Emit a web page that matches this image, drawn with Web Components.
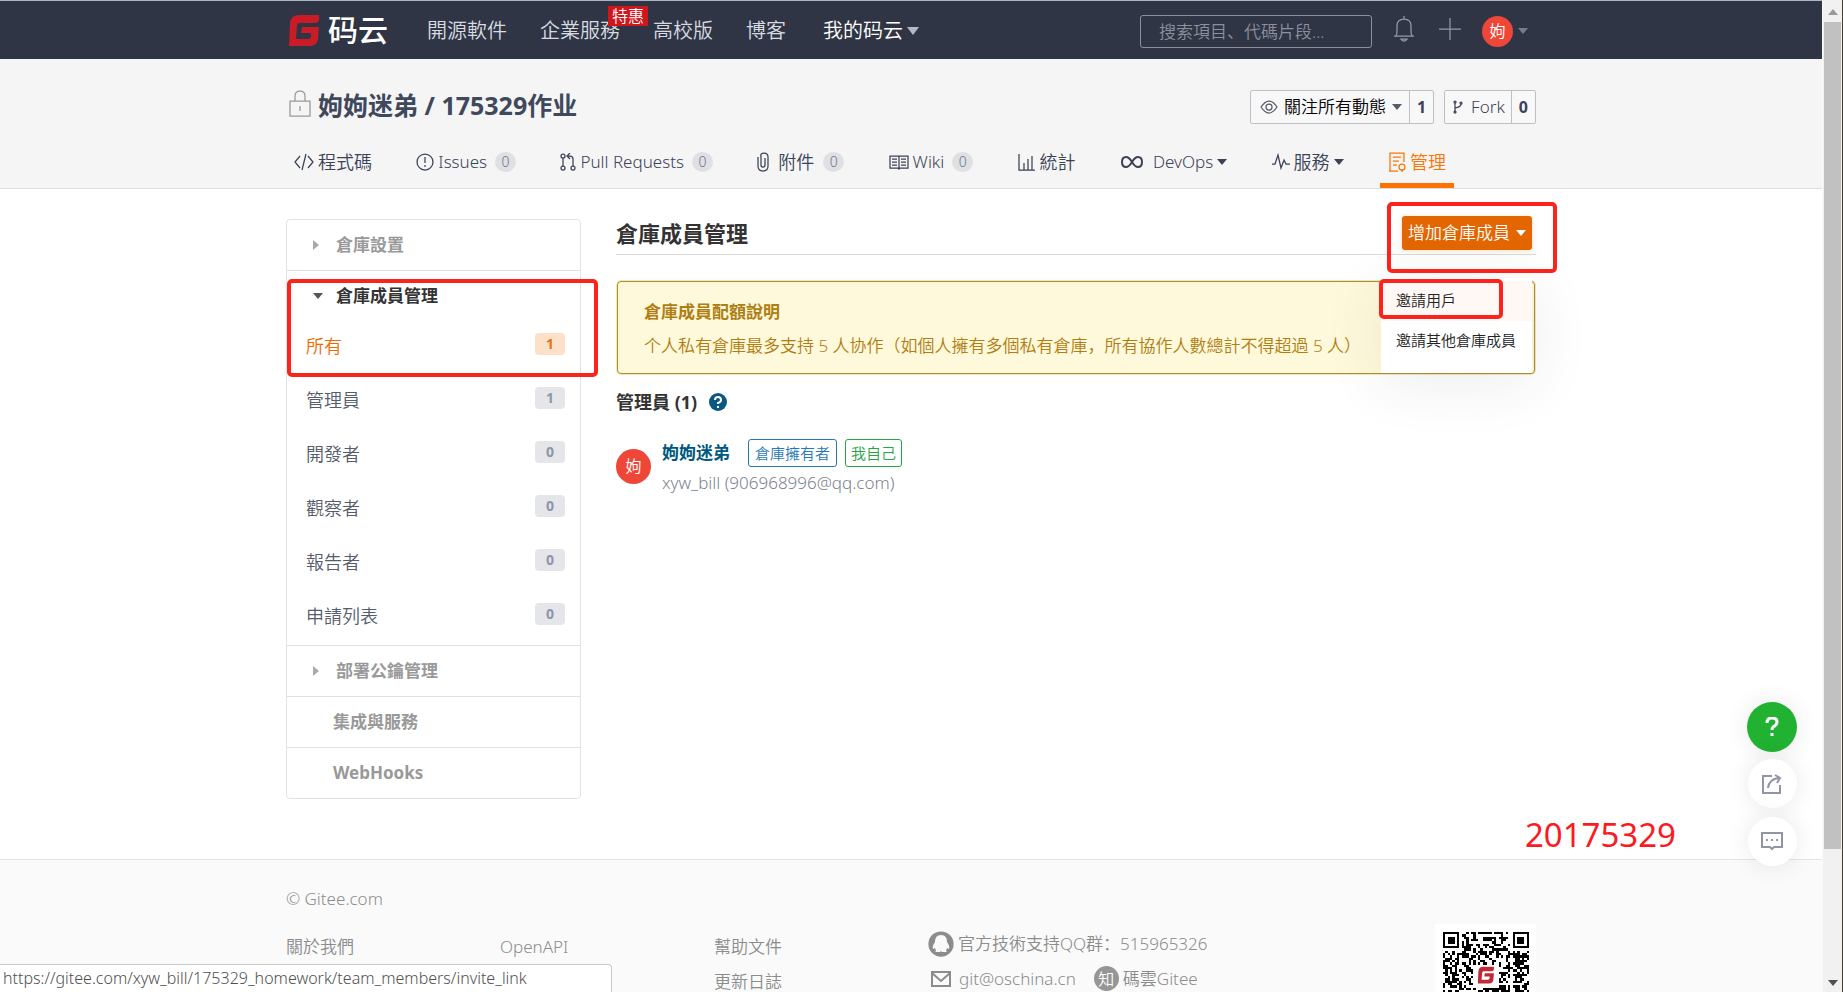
<!DOCTYPE html>
<html lang="zh-CN">
<head>
<meta charset="utf-8">
<title>倉庫成員管理 - Gitee</title>
<style>
html,body{margin:0;height:100%}
body{font-family:"Noto Sans","Noto Sans CJK SC",sans-serif;font-size:17px;font-weight:350;line-height:24px;color:#3a4256;background:#fff;overflow:hidden}
</style>
</head>
<body>
<gitee-window></gitee-window>
<script>
const BASE = `*{box-sizing:border-box}a{color:inherit;text-decoration:none}button{font:inherit;color:inherit;background:none;border:0;padding:0;margin:0;cursor:pointer}svg{display:block;flex:none}
.wrap{width:min(1250px,calc(100% - 40px));margin:0 auto}
.caret{width:0;height:0;border:5px solid transparent;border-top:6px solid currentColor;border-bottom:0;flex:none}`;
const define = (name, css, html, setup) => customElements.define(name, class extends HTMLElement {
  constructor(){
    super();
    this.attachShadow({mode:'open'}).innerHTML = `<style>${BASE}${css}</style>${typeof html==='function'?html(this):html}`;
    if(setup) setup(this.shadowRoot,this);
  }
});
const G_MARK = 'M30 0H10Q2 0 1 8L0 31H21Q28 31 29 24L30 12H13L12 18H22V21Q22 24 19 24H7L8 11Q8 8 11 8H26Q29 8 30 5Z';

const ICONS = {
  code:[20,18,'<path d="M6 3L1 9l5 6M14 3l5 6-5 6M12 1L8 17"/>'],
  issue:[18,18,'<circle cx="9" cy="9" r="8"/><path d="M9 4v6M9 12v2"/>'],
  pull:[16,18,'<circle cx="3" cy="3" r="2"/><circle cx="3" cy="15" r="2"/><circle cx="13" cy="15" r="2"/><path d="M3 5v8M13 13V6q0-3-3-3H8M10 0L7 3l3 3"/>'],
  clip:[12,20,'<path d="M1 5v9q0 5 5 5t5-5V5q0-4-4-4T4 5v8q0 2 2 2t2-2V6"/>'],
  wiki:[20,16,'<path d="M10 2H1v12h8l1 1 1-1h8V2h-9v12M3 5h5M3 8h5M3 11h5M12 5h5M12 8h5M12 11h5"/>'],
  stats:[18,18,'<path d="M1 1v16h16M6 10v7M10 6v11M14 3v14"/>'],
  loop:[24,14,'<path stroke-width="2" d="M12 7q-3-5-6-5-4 0-4 5t4 5q3 0 6-5t6-5q4 0 4 5t-4 5q-3 0-6-5z"/>'],
  pulse:[18,18,'<path d="M0 11h3l3-9 3 13 3-8 2 4h4"/>'],
  manage:[18,20,'<path d="M16 10V1H2v18h8M5 5h8M5 9h6M5 13h4M1 19h9"/><circle cx="14" cy="15" r="3"/><path d="M14 17v3"/>'],
  lock:[24,28,'<path d="M2 12h20v15H2zM7 12V7q0-5 5-5t5 5v5M12 17v5"/>'],
  eye:[18,16,'<path d="M1 8q8-12 16 0Q9 20 1 8z"/><circle cx="9" cy="8" r="3"/>'],
  fork:[12,14,'<circle cx="3" cy="2" r="1"/><circle cx="9" cy="3" r="1"/><circle cx="3" cy="12" r="1"/><path d="M3 3v8M9 4q0 3-6 4"/>'],
  bell:[22,28,'<path d="M1 21h20M3 21q1-2 1-5v-5q0-7 7-7t7 7v5q0 3 1 5M11 4V1M8 24q3 4 6 0z"/>'],
  plus:[22,22,'<path d="M11 0v22M0 11h22"/>'],
  share:[20,20,'<path stroke-width="2" d="M10 2H1v17h17v-8M6 14q1-9 11-10M13 1l5 3-3 5"/>'],
  chat:[22,20,'<path stroke-width="2" d="M1 1h20v14h-8l-2 2-2-2H1z"/><path stroke-width="2" d="M5 8h2M10 8h2M15 8h2"/>'],
  mail:[20,16,'<path stroke-width="2" d="M1 1h18v14H1zM1 2l9 8 9-8"/>'],
  qq:[26,26,'<circle cx="13" cy="13" r="12" fill="currentColor"/><path fill="#fafafa" stroke="none" d="M13 4q-6 0-6 7-3 4-2 7l2-1 1 3-1 1h5l1-1 1 1h5l-1-1 1-3 2 1q1-3-2-7 0-7-6-7z"/>'],
  help:[18,18,'<circle cx="9" cy="9" r="9" fill="currentColor" stroke="none"/><path stroke="#fff" stroke-width="2" d="M6 7q0-3 3-3t3 3q0 2-3 3v1M9 13v2"/>'],
  question:[14,20,'<path stroke-width="3" d="M2 6q0-5 5-5t5 4q0 3-4 5-1 1-1 3M7 16v3"/>']
};
define('ui-icon',':host{display:inline-block;flex:none}',el=>{
  const [w,h,p]=ICONS[el.getAttribute('name')];
  return `<svg width="${w}" height="${h}" viewBox="0 0 ${w} ${h}" fill="none" stroke="currentColor" stroke-width="1.25" aria-hidden="true">${p}</svg>`;
});
define('user-avatar',`:host{display:inline-flex;align-items:center;justify-content:center;width:var(--size,31px);height:var(--size,31px);border-radius:50%;background:#ee4637;color:#fff;font-size:16px;line-height:24px;flex:none}`,'<slot></slot>');
define('count-badge',`:host{display:inline-block;min-width:21px;height:20px;border-radius:10px;background:#dfe0e4;color:#6c7489;font-size:14px;line-height:20px;text-align:center}`,'<slot></slot>');

define('site-header',`:host{display:block;background:#2f3545;border-top:1px solid #a9b6c4;color:#d9dbe0;font-size:20px}
.wrap{display:flex;align-items:center;height:58px;padding-top:2px}
.logo{display:flex;align-items:center;gap:9px;color:#fff;font-size:30px;font-weight:500;line-height:34px;margin:0 39px 2px 3px}
nav{display:flex;align-items:center}
nav a{position:relative;margin-right:33px;white-space:nowrap}
nav a:last-child{display:flex;align-items:center;gap:4px;color:#fff}
nav a:nth-child(4){margin-right:37px}
nav .caret{border-width:6px;border-top-width:8px;border-bottom:0;color:#b4b8c2}
.hot{position:absolute;left:68px;top:-13px;background:#d0161d;color:#fff;font-size:16px;line-height:20px;padding:0 4px;z-index:1}
form{margin:0 21px 0 auto}
input{display:block;width:232px;height:33px;border:1px solid #8b909c;border-radius:3px;background:transparent;padding:0 18px;font:inherit;font-size:17px;color:#fff;outline:0}
input::placeholder{color:#8b909c;opacity:1}
.tools{display:flex;align-items:center;color:#9499a5;margin-right:8px}
.tools button:nth-child(1){margin-right:24px}.tools button:nth-child(2){margin-right:21px}
.me{display:flex;align-items:center;gap:5px}.tools .caret{color:#767c8a}`,
`<div class="wrap"><a class="logo" href="#home"><svg width="30" height="31" viewBox="0 0 30 31"><path fill="#cb1b27" d="${G_MARK}"/></svg><span>码云</span></a>
<nav><a href="#explore">開源軟件</a><a href="#enterprise">企業服務<span class="hot">特惠</span></a><a href="#education">高校版</a><a href="#blog">博客</a><a href="#mine">我的码云<i class="caret"></i></a></nav>
<form role="search"><input type="search" aria-label="搜索" placeholder="搜索項目、代碼片段..."></form>
<div class="tools"><button aria-label="通知"><ui-icon name="bell"></ui-icon></button><button aria-label="新建"><ui-icon name="plus"></ui-icon></button><button class="me"><user-avatar>姁</user-avatar><i class="caret"></i></button></div></div>`);

define('repo-tab',`:host{display:block}a{display:flex;align-items:center;height:49px;padding:0 8px 4px;gap:4px;white-space:nowrap;font-size:17px}
:host([cjk]) a{font-size:18px}:host([gap]) a{gap:9px}:host([gap]) .caret{margin-left:-5px}
slot[name=end]::slotted(count-badge){margin-left:4px}:host([gap]) slot[name=end]::slotted(count-badge){margin-left:0}
:host([active]) a{color:#fe7300;box-shadow:inset 0 -5px #fe7300}`,
el=>`<a href="#${el.getAttribute('icon')}"><ui-icon name="${el.getAttribute('icon')}"></ui-icon><slot></slot><slot name="end"></slot>${el.hasAttribute('menu')?'<i class="caret"></i>':''}</a>`);

define('repo-header',`:host{display:block;background:#f5f5f5;border-bottom:1px solid #dcdddf}
.top{display:flex;align-items:center;justify-content:space-between;height:80px;padding-top:14px}
h1{display:flex;align-items:center;gap:6px;margin:0;padding-left:2px;font-size:25px;line-height:32px;font-weight:700;white-space:nowrap}
h1 ui-icon{color:#999;margin-bottom:6px}h1 a{margin-bottom:2px;color:#40485b}
.acts{display:flex;gap:10px;padding-top:2px}
.act{display:flex;height:34px;border:1px solid #bfc0c4;border-radius:2px;background:#f8f8f8;white-space:nowrap}
.act button{display:flex;align-items:center;gap:6px;padding:0 7px 0 9px}
.act .watch{font-size:17px;color:#000}.watch ui-icon,.watch .caret{color:#555c6c}
.act .fork{font-size:17px;gap:7px;padding:0 6px 0 7px}
.act a{border-left:1px solid #bfc0c4;font-weight:700;font-size:16px;line-height:32px;padding:0 7px}
nav{display:flex;justify-content:space-between;padding-right:82px}`,
`<div class="wrap"><div class="top"><h1><ui-icon name="lock"></ui-icon><a href="#repo">姁姁迷弟 / 175329作业</a></h1>
<div class="acts"><div class="act"><button class="watch"><ui-icon name="eye"></ui-icon>關注所有動態<i class="caret"></i></button><a href="#watchers">1</a></div><div class="act"><button class="fork"><ui-icon name="fork"></ui-icon>Fork</button><a href="#forks">0</a></div></div></div>
<nav><repo-tab icon="code" cjk>程式碼</repo-tab><repo-tab icon="issue">Issues<count-badge slot="end">0</count-badge></repo-tab><repo-tab icon="pull">Pull Requests<count-badge slot="end">0</count-badge></repo-tab><repo-tab icon="clip" cjk gap>附件<count-badge slot="end">0</count-badge></repo-tab><repo-tab icon="wiki">Wiki<count-badge slot="end">0</count-badge></repo-tab><repo-tab icon="stats" cjk>統計</repo-tab><repo-tab icon="loop" menu gap>DevOps</repo-tab><repo-tab icon="pulse" cjk menu>服務</repo-tab><repo-tab icon="manage" cjk active>管理</repo-tab></nav></div>`);

define('side-group',`:host{display:block;border-top:1px solid #dfe0e2}:host(:first-of-type){border-top:0}
.head{display:flex;align-items:center;width:100%;height:50px;padding-left:46px;font-weight:700;font-size:17px;color:#999}
.mark{width:0;height:0;border:5px solid transparent;border-left:6px solid #aaa;border-right:0;margin:0 17px 0 -20px}
:host([open]) .head{color:#333}
:host([open]) .mark{border:5px solid transparent;border-top:6px solid #555;border-bottom:0;margin-right:13px}`,
el=>`<button class="head">${el.hasAttribute('open')||el.hasAttribute('closed')?'<i class="mark"></i>':''}${el.getAttribute('label')}</button><slot></slot>`);
define('side-item',`:host{display:block}a{display:flex;align-items:center;justify-content:space-between;height:54px;padding:0 15px 4px 19px;font-size:18px;color:#555c6c}
b{width:30px;height:22px;border-radius:4px;background:#e5e6e9;color:#8e95a9;font-size:14px;line-height:22px;text-align:center;margin-bottom:4px}
:host([active]) a{color:#f06a00}:host([active]) b{background:#fde0c8;color:#e8701b}`,
el=>`<a href="#role"><slot></slot><b>${el.getAttribute('count')}</b></a>`);
define('settings-menu',`:host{display:block;position:relative;width:295px;flex:none;border:1px solid #e2e3e5;border-radius:4px}`,
`<side-group label="倉庫設置" closed></side-group><side-group label="倉庫成員管理" open><side-item count="1" active>所有</side-item><side-item count="1">管理員</side-item><side-item count="0">開發者</side-item><side-item count="0">觀察者</side-item><side-item count="0">報告者</side-item><side-item count="0">申請列表</side-item></side-group><side-group label="部署公鑰管理" closed></side-group><side-group label="集成與服務"></side-group><side-group label="WebHooks"></side-group><slot></slot>`);

define('mark-box',`:host{position:absolute;z-index:5;border:4px solid #fb231b;border-radius:5px;pointer-events:none}`,'');

define('add-member',`:host{display:block;position:relative}
.btn{display:flex;align-items:center;gap:6px;height:34px;padding:0 6px;background:#e36600;color:#fff;border-radius:3px;font-size:17px;white-space:nowrap;box-shadow:0 1px 6px #f3b98566}
.menu{position:absolute;z-index:2;top:62px;right:0;width:151px;height:95px;padding-top:3px;background:#fff;box-shadow:0 8px 60px #28324618;font-size:15px;color:#222}
.menu a{display:block;height:40px;line-height:38px;padding-left:15px;white-space:nowrap}
.menu a:first-child{background:#fff8f5}`,
`<button class="btn">增加倉庫成員<i class="caret"></i></button><div class="menu"><a href="#invite_link">邀請用戶</a><a href="#invite_other">邀請其他倉庫成員</a></div><slot></slot>`);

define('quota-notice',`:host{display:block;border:1px solid #b08d33;box-shadow:0 0 0 1px #e3cf7a80;border-radius:4px;background:#fff9db;color:#b07d12;padding:17px 26px 13px;white-space:nowrap}
h2{margin:0 0 6px;font-size:17px;line-height:26px;font-weight:700}p{margin:0;font-size:17px;line-height:29px}`,
`<h2>倉庫成員配額說明</h2><p>个人私有倉庫最多支持 5 人协作（如個人擁有多個私有倉庫，所有協作人數總計不得超過 5 人）</p>`);

define('member-row',`:host{display:flex;align-items:center;gap:11px;--size:35px}
user-avatar{margin-bottom:2px}
.l{display:flex;align-items:center}.l a{font-weight:700;font-size:17px;color:#005980;margin-right:18px}
.tag{height:28px;border:1px solid #2779b5;border-radius:3px;color:#2779b5;font-size:15px;line-height:26px;padding:0 6px;margin-right:8px}
.me{color:#27a443;border-color:#27a443;padding:0 5px}
p{margin:4px 0 0;color:#7c8292;font-size:17px;line-height:24px}`,
`<user-avatar>姁</user-avatar><div><div class="l"><a href="#xyw_bill">姁姁迷弟</a><span class="tag">倉庫擁有者</span><span class="tag me">我自己</span></div><p>xyw_bill (906968996@qq.com)</p></div>`);

define('member-panel',`:host{display:block;flex:1;min-width:0}
header{display:flex;align-items:center;height:36px;border-bottom:1px solid #d9dade;padding:0 4px 0 0;justify-content:space-between}
h1{margin:0 0 8px;font-size:22px;line-height:30px;color:#333}
add-member{margin-bottom:7px}
quota-notice{margin:26px 1px 15px}
h2{display:flex;align-items:center;gap:12px;margin:0 0 24px;font-size:18px;line-height:26px;color:#333}
h2 ui-icon{color:#0a5880}`,
`<header><h1>倉庫成員管理</h1><add-member><slot></slot></add-member></header><quota-notice></quota-notice><h2>管理員 (1)<ui-icon name="help"></ui-icon></h2><member-row></member-row>`);

define('qr-code',`:host{display:block;background:#fff;padding:8px}`,'',root=>{
  const n=37, on=(x,y)=>{
    for(const [a,b] of [[0,0],[n-7,0],[0,n-7]]){
      const i=x-a,j=y-b;
      if(i>=-1&&i<=7&&j>=-1&&j<=7){
        if(i<0||j<0||i>6||j>6) return false;
        const d=Math.max(Math.abs(i-3),Math.abs(j-3));
        return d!==2;
      }
    }
    if(x>12&&x<24&&y>13&&y<24) return false;
    return ((x*73856093^y*19349663^(x*y+7)*83492791)>>>7)%100<50;
  };
  let d='';
  for(let y=0;y<n;y++)for(let x=0;x<n;x++)if(on(x,y))d+=`M${x} ${y}h1v1h-1z`;
  root.innerHTML+=`<svg width="86" height="86" viewBox="0 0 37 37" shape-rendering="crispEdges" role="img" aria-label="QR"><path d="${d}"/><path fill="#c02a37" shape-rendering="auto" transform="translate(15 15)scale(.23)" d="${G_MARK}"/></svg>`;
});
define('site-footer',`:host{display:block;background:#fafafa;border-top:1px solid #e4e4e4;color:#8c8c8c;font-size:17px}
p{margin:0;padding:27px 0 18px;line-height:24px}
.cols{display:grid;grid-template-columns:214px 214px 214px 1fr 101px;height:160px}
.col{display:flex;flex-direction:column;line-height:35px}
.contact{display:flex;flex-direction:column;white-space:nowrap;margin-top:-3px}
.contact div{display:flex;align-items:center;height:35px;gap:4px}
.mail ui-icon{margin:0 4px 0 3px}.zh{--size:25px;margin-left:14px}
user-avatar{background:#969696}
qr-code{margin:-5px 0 0}`,
`<div class="wrap"><p>© Gitee.com</p><div class="cols"><div class="col"><a href="#about">關於我們</a></div><div class="col"><a href="#api">OpenAPI</a></div><div class="col"><a href="#help">幫助文件</a><a href="#log">更新日誌</a></div>
<div class="contact"><div><ui-icon name="qq"></ui-icon>官方技術支持QQ群：515965326</div><div class="mail"><ui-icon name="mail"></ui-icon><a href="#mail">git@oschina.cn</a><user-avatar class="zh">知</user-avatar><a href="#zhihu">碼雲Gitee</a></div></div><div><qr-code></qr-code></div></div></div>`);

define('float-tools',`:host{position:absolute;right:25px;bottom:126px;display:flex;flex-direction:column;align-items:center;gap:9px;z-index:4}
button{display:flex;align-items:center;justify-content:center;width:49px;height:49px;border-radius:50%;background:#fff;color:#9096a6;box-shadow:0 0 24px #00000018}
.help{width:50px;height:50px;background:#21b232;color:#fff;margin-bottom:-2px}`,
`<button class="help" aria-label="幫助"><ui-icon name="question"></ui-icon></button><button aria-label="分享"><ui-icon name="share"></ui-icon></button><button aria-label="反饋"><ui-icon name="chat"></ui-icon></button>`);
define('scroll-rail',`:host{display:flex;flex-direction:column;align-items:center;background:#f1f1f1;border-left:1px solid #fafafa;border-right:1px solid #453b36;padding:9px 0 6px;gap:7px}
.t{flex:1;align-self:stretch;display:flex}.t i{width:17px;margin:0 auto;height:87%;background:#c1c1c1}
.up{border:5px solid transparent;border-bottom:6px solid #999;border-top:0}.caret{color:#505050}`,
`<i class="up"></i><div class="t"><i></i></div><i class="caret"></i>`);
define('status-bar',`:host{position:absolute;left:0;bottom:0;z-index:6;height:28px;width:612px;border:1px solid #c9c9c9;border-width:1px 1px 0 0;border-radius:0 4px 0 0;background:#fff;color:#505050;font-size:16px;line-height:26px;padding-left:3px;white-space:nowrap}`,'<slot></slot>');

define('gitee-window',`:host{display:grid;grid-template-columns:minmax(0,1fr) 21px;height:100vh;overflow:hidden;position:relative}
.page{position:relative;overflow:hidden}
main{display:flex;align-items:flex-start;gap:35px;position:relative;padding:30px 0 60px}
.b1{left:0;top:59px;width:311px;height:98px}
.b2{right:-25px;top:-14px;width:170px;height:71px}
.b3{right:29px;top:63px;width:124px;height:40px}
.num{position:absolute;right:-140px;bottom:4px;font-size:33px;font-weight:400;line-height:40px;color:#fb1a1f}`,
`<div class="page"><site-header></site-header><repo-header></repo-header>
<main class="wrap"><settings-menu><mark-box class="b1"></mark-box></settings-menu><member-panel><mark-box class="b2"></mark-box><mark-box class="b3"></mark-box></member-panel><span class="num">20175329</span></main>
<site-footer></site-footer><float-tools></float-tools></div><scroll-rail></scroll-rail><status-bar>https://gitee.com/xyw_bill/175329_homework/team_members/invite_link</status-bar>`);
</script>
</body>
</html>
